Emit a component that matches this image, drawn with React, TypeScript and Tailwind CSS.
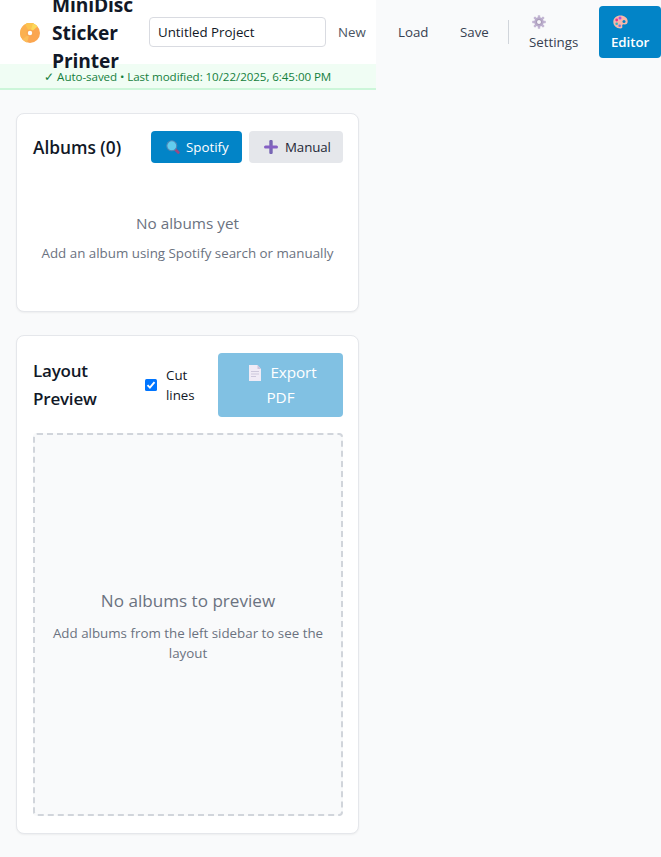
import React from "react";

function Disc() {
  return (
    <svg className="h-5 w-5 shrink-0" viewBox="0 0 20 20">
      <circle cx="10" cy="10" r="10" fill="#fba650" />
      <path d="M10 10 L3 17.1 A10 10 0 0 1 14 .8Z" fill="#fbb050" />
      <path d="M10 10 L5 1.300 A10 10 0 0 1 16.800 2.700Z" fill="#fcc44f" />
      <path d="M10 10 L13 .5 A10 10 0 0 1 17.500 3.400Z" fill="#fbd85a" />
      <path d="M10 10 L7 19.500 A10 10 0 0 1 2.500 16.600Z" fill="#fbbd5a" />
      <circle cx="10" cy="10" r="3.600" fill="#f9a550" />
      <circle cx="10" cy="10" r="2.200" fill="#fff" />
    </svg>
  );
}

function Gear() {
  return (
    <svg className="h-3.5 w-3.5" viewBox="0 0 14 14">
      <g fill="#c3b6d3">
        <rect x="5.800" y=".2" width="2.400" height="13.600" rx=".6" />
        <rect x="5.800" y=".2" width="2.400" height="13.600" rx=".6" transform="rotate(45 7 7)" />
        <rect x="5.800" y=".2" width="2.400" height="13.600" rx=".6" transform="rotate(90 7 7)" />
        <rect x="5.800" y=".2" width="2.400" height="13.600" rx=".6" transform="rotate(135 7 7)" />
      </g>
      <circle cx="7" cy="7" r="4" fill="#b9abcb" stroke="#b9abcb" strokeWidth="1.400" />
      <circle cx="7" cy="7" r="2.500" fill="#f6f4f9" stroke="#9587a6" strokeWidth=".8" />
    </svg>
  );
}

function Palette() {
  return (
    <svg className="h-[14px] w-[15px]" viewBox="0 0 15 14">
      <path d="M7.500.5C3.500.5.3 3.200.3 6.800c0 3.800 3 6.700 7 6.700 1.700 0 2.300-.9 2-2-.4-1.600.4-2.300 2-2.100 2.100.2 3.400-.9 3.400-3C14.700 3 11.500.5 7.500.5Z" fill="#f9b6a8" />
      <circle cx="11" cy="6.500" r="1.500" fill="#0284c7" />
      <circle cx="7" cy="3" r="1.500" fill="#b24fe0" />
      <circle cx="3.700" cy="5" r="1.400" fill="#f0308a" />
      <circle cx="3.700" cy="8.700" r="1.300" fill="#35b5c4" />
      <circle cx="6.700" cy="10.800" r="1.300" fill="#6d7be6" />
    </svg>
  );
}

function Magnifier() {
  return (
    <svg className="h-[14px] w-[14px]" viewBox="0 0 14 14">
      <path d="M9.300 9.600 12.300 12.400" stroke="#9a4a82" strokeWidth="2.800" strokeLinecap="round" />
      <circle cx="5.800" cy="5.800" r="5" fill="#62cdee" stroke="#4f86b5" strokeWidth="1.100" />
    </svg>
  );
}

function Plus() {
  return (
    <svg className="h-[14px] w-[14px]" viewBox="0 0 14 14">
      <path d="M7 1.500V12.500" stroke="#7866b4" strokeWidth="3.400" strokeLinecap="round" />
      <path d="M1.500 7H12.500" stroke="#8560c4" strokeWidth="3" strokeLinecap="round" />
    </svg>
  );
}

function Page() {
  return (
    <svg className="h-4 w-3" viewBox="0 0 12 16">
      <path d="M0 0H8.500L12 4V16H0Z" fill="#f0ebf6" />
      <path d="M8.500 0V4H12Z" fill="#cfc5dc" />
      <path d="M2 6.500H10M2 9H10M2 11.500H7" stroke="#cdc8dc" strokeWidth="1" />
    </svg>
  );
}

export default function App() {
  return (
    <div className="h-[857px] w-full overflow-hidden bg-[#f9fafb] font-['Open_Sans','Noto_Sans',sans-serif] text-[#111827]">
      <header className="relative z-10 flex h-16 w-[375.5px] items-center bg-white pl-5 pt-0.5">
        <Disc />
        <h1 className="ml-3 w-[97px] shrink-0 text-[19.2px] leading-7 font-bold tracking-[-0.1px]">
          MiniDisc<br />Sticker<br />Printer
        </h1>
        <div className="-mt-0.5 flex h-[30px] w-[177px] shrink-0 items-center rounded border border-[#d9dbe1] bg-white pt-px pl-2 text-[13.3px]">
          Untitled Project
        </div>
        <nav className="-mt-[2px] flex shrink-0 items-center text-[13.3px] leading-5 text-[#374151]">
          <span className="ml-3 w-[60px] text-[#4b5563]">New</span>
          <span className="w-[62px]">Load</span>
          <span className="w-12">Save</span>
          <span className="h-6 w-px bg-[#d1d5db]" />
          <span className="ml-5 flex w-[70px] flex-col">
            <span className="flex h-5 items-center pl-[3px]"><Gear /></span>
            <span>Settings</span>
          </span>
          <span className="flex h-[52px] w-[62px] flex-col rounded bg-[#0284c7] pt-1.5 pl-3 font-semibold text-white">
            <span className="flex h-5 items-center pl-0.5"><Palette /></span>
            <span className="tracking-[-0.05px]">Editor</span>
          </span>
        </nav>
      </header>
      <div className="flex h-[26px] w-[375.5px] items-center justify-center border-b-2 border-[#ccf6d9] bg-[#f0fdf4] pt-0.5 text-[11.6px] text-[#15803d]">
        <span className="tracking-[-0.07px] whitespace-nowrap">✓ Auto-saved • Last modified: 10/22/2025, 6:45:00 PM</span>
      </div>

      <main className="flex w-[376px] flex-col gap-6 px-4 pt-[23px]">
        <section className="h-[199px] w-[343px] rounded-lg border border-[#e5e7eb] bg-white px-4 pt-[17px] shadow-xs">
          <div className="flex h-8 items-center">
            <h2 className="w-[118px] shrink-0 pt-px text-[17.3px] font-semibold whitespace-nowrap">Albums (0)</h2>
            <div className="flex h-8 w-[91px] shrink-0 items-center gap-[6px] rounded bg-[#0284c7] pl-[15px] text-[13.3px] text-white">
              <Magnifier /><span className="pt-px">Spotify</span>
            </div>
            <div className="ml-[7px] flex h-8 w-[94px] shrink-0 items-center gap-[7px] rounded bg-[#e5e7eb] pl-[15px] text-[13.3px] text-[#1f2937]">
              <Plus /><span className="pt-px tracking-[-0.1px]">Manual</span>
            </div>
          </div>
          <div className="mt-12 text-center text-[#6b7280]">
            <p className="text-[15.3px] leading-6">No albums yet</p>
            <p className="mt-2 text-[13.35px] leading-5 whitespace-nowrap">Add an album using Spotify search or manually</p>
          </div>
        </section>

        <section className="-mt-px h-[499px] w-[343px] rounded-lg border border-[#e5e7eb] bg-white px-4 pt-4 shadow-xs">
          <div className="flex h-[65px] items-center">
            <h2 className="w-28 shrink-0 pt-px text-[17px] leading-7 font-semibold tracking-[-0.2px]">Layout<br />Preview</h2>
            <label className="flex w-[73px] shrink-0 items-center gap-[9px] text-[13.3px] leading-5">
              <svg className="h-3 w-3" viewBox="0 0 12 12">
                <rect width="12" height="12" rx="1.500" fill="#0075ff" />
                <path d="M2.500 6.200 4.900 8.600 9.500 3.200" fill="none" stroke="#fff" strokeWidth="1.900" />
              </svg>
              <span className="pt-px">Cut<br />lines</span>
            </label>
            <div className="flex h-16 w-[125px] shrink-0 flex-col items-center justify-center rounded bg-[#81c1e3] pt-px text-[15.3px] leading-[25px] text-white">
              <span className="flex items-center gap-[9px] pl-[5px]"><Page /><span className="tracking-[-0.1px]">Export</span></span>
              <span>PDF</span>
            </div>
          </div>
          <div className="mt-4 flex h-[383px] w-[310px] flex-col items-center justify-center rounded border-2 border-dashed border-[#d1d5db] bg-[#f9fafb] pt-px text-center text-[#6b7280]">
            <p className="text-[17.1px] leading-7">No albums to preview</p>
            <p className="mt-2 text-[13.35px] leading-5 whitespace-nowrap">
              Add albums from the left sidebar to see the<br />layout
            </p>
          </div>
        </section>
      </main>
    </div>
  );
}
